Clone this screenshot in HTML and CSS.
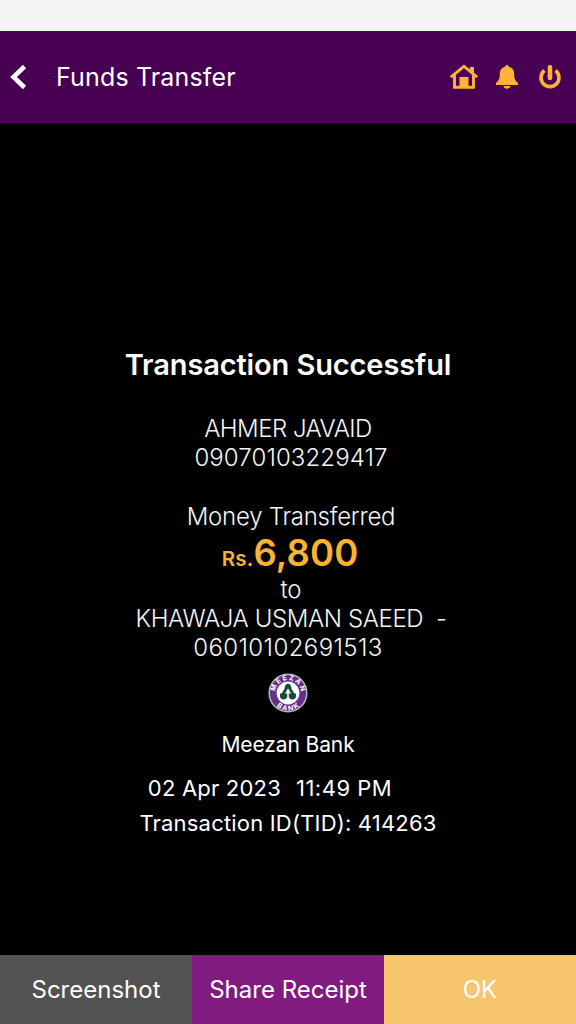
FILE: index.html
```html
<!DOCTYPE html>
<html lang="en">
<head>
<meta charset="utf-8">
<title>Funds Transfer</title>
<link rel="stylesheet" href="styles.css">
</head>
<body>
<div class="screen">
  <div class="status-bar"></div>
  <header class="header">
    <svg class="back" viewBox="0 0 18 26"><path d="M15.500 2.500 4.500 13 15.500 23.500" fill="none" stroke="#fff" stroke-width="4.600"/></svg>
    <h1 class="header-title"><span>Funds Transfer</span></h1>
    <svg class="icon home" viewBox="0 0 30 26"><path d="M1.800 13.200 15 2.400 28.200 13.200M5.500 11V23.200H24.500V11" fill="none" stroke="#fdb336" stroke-width="2.900"/><path d="M21 3h4v7l-4-3.500zM10.500 13h9V24h-9z" fill="#fdb336"/></svg>
    <svg class="icon bell" viewBox="0 0 24 26"><path d="M12 1c1 0 1.800.8 1.800 1.800 3.900.8 5.400 3.700 5.400 7.200 0 5.300 1.200 6.600 3.800 9V21H1v-2c2.600-2.400 3.800-3.700 3.800-9 0-3.500 1.500-6.400 5.400-7.200 0-1 .8-1.800 1.800-1.800zM8.500 22h7c-.3 1.800-1.700 2.700-3.500 2.700s-3.200-.9-3.500-2.700z" fill="#fdb336"/></svg>
    <svg class="icon power" viewBox="0 0 24 26"><path d="M6.500 6.500A9 9 0 1 0 17.500 6.500" fill="none" stroke="#fdb336" stroke-width="3.600"/><path d="M12 3.200V14" stroke="#fdb336" stroke-width="4.600" stroke-linecap="round"/></svg>
  </header>
  <main class="receipt">
    <h2 class="heading">Transaction Successful</h2>
    <p class="line sender">AHMER JAVAID</p>
    <p class="line account">09070103229417</p>
    <p class="line moved">Money Transferred</p>
    <p class="amount"><span class="currency">Rs.</span><span class="value">6,800</span></p>
    <p class="line to">to</p>
    <p class="line payee">KHAWAJA USMAN SAEED&nbsp; -</p>
    <p class="line payee-account">06010102691513</p>
    <svg class="logo" viewBox="0 0 40 40">
      <circle cx="20" cy="20" r="18.800" fill="#63318b" stroke="#b9b1bf" stroke-width="1.500"/>
      <circle cx="20" cy="20" r="11.400" fill="#fff"/>
      <path d="M20 12.500 14.500 22M20 12.500 25.500 22" fill="none" stroke="#174b38" stroke-width="2.800"/>
      <path d="M17.500 12q2.500-2.400 5 0l1 3h-7z" fill="#174b38"/>
      <path d="M12 20.500h7.200v3q-.5 3-3.600 3t-3.600-3zM20.800 20.500H28v3q-.5 3-3.600 3t-3.600-3z" fill="#174b38"/>
      <path id="arc-top" d="M7 20A13 13 0 0 1 33 20" fill="none"/>
      <path id="arc-bottom" d="M2.300 20A17.700 17.700 0 0 0 37.700 20" fill="none"/>
      <text class="logo-text"><textPath href="#arc-top" startOffset="50%" textLength="38">MEEZAN</textPath></text>
      <text class="logo-text"><textPath href="#arc-bottom" startOffset="50%" textLength="25">BANK</textPath></text>
    </svg>
    <p class="bank">Meezan Bank</p>
    <p class="when"><span class="date">02 Apr 2023</span><span class="time">11:49 PM</span></p>
    <p class="tid">Transaction ID(TID): 414263</p>
  </main>
  <footer class="actions">
    <button class="action screenshot">Screenshot</button>
    <button class="action share">Share Receipt</button>
    <button class="action ok">OK</button>
  </footer>
</div>
</body>
</html>
```
FILE: styles.css
```css
* { box-sizing: border-box; }
body { margin: 0; background: #000; font-family: Inter, "Liberation Sans", sans-serif; color: #fff; }
h1, h2, p { margin: 0; white-space: nowrap; }
.screen { display: flex; flex-direction: column; width: 576px; height: 1024px; background: #000; }
.status-bar { height: 31px; background: #f4f3f4; }
.header { display: flex; align-items: center; height: 92px; padding-left: 9px; padding-right: 14px; background: #470052; }
.back { width: 18px; height: 26px; margin-right: 29px; }
.header-title { flex: 1; font-size: 25px; font-weight: 400; line-height: 32px; letter-spacing: 0.15px; }
.icon { display: block; height: 26px; }
.home { width: 30px; margin-right: 16px; }
.bell { width: 24px; margin-right: 19px; }
.power { width: 24px; }
.receipt { flex: 1; display: flex; flex-direction: column; align-items: center; padding-top: 221px; }
.heading { font-size: 29px; font-weight: 600; line-height: 40px; letter-spacing: -0.12px; padding-top: 1px; margin-bottom: 29px; }
.line { font-size: 24px; font-weight: 300; line-height: 29px; color: #f5f5f5; }
.sender { letter-spacing: -0.5px; }
.account { padding-left: 6px; margin-bottom: 30px; letter-spacing: 0.1px; }
.moved { padding-left: 6px; letter-spacing: -0.25px; }
.amount { display: flex; align-items: baseline; height: 44px; line-height: 44px; padding-left: 4px; color: #f9b233; font-weight: 600; }
.currency { font-size: 20.5px; letter-spacing: 0.2px; }
.value { font-size: 36.5px; letter-spacing: 0.1px; }
.to, .payee { padding-left: 6px; }
.payee { letter-spacing: -0.38px; }
.payee-account { letter-spacing: 0.4px; }
.logo { width: 40px; height: 40px; margin-top: 11px; margin-bottom: 16px; }
.logo-text { font-size: 7px; font-weight: 700; fill: #fff; text-anchor: middle; }
.bank { font-size: 21px; line-height: 32px; letter-spacing: -0.1px; }
.when { display: flex; gap: 15px; font-size: 22px; line-height: 36px; margin-top: 9px; margin-right: 36px; letter-spacing: 0.2px; }
.time { letter-spacing: 0.5px; }
.tid { font-size: 22px; line-height: 34px; letter-spacing: 0.19px; }
.actions { display: grid; grid-template-columns: repeat(3, 1fr); height: 69px; }
.action { border: 0; padding: 0; font-family: inherit; font-size: 24px; color: #fff; }
.screenshot { background: #525252; }
.share { background: #821b80; }
.ok { background: #f8c56f; }
```
